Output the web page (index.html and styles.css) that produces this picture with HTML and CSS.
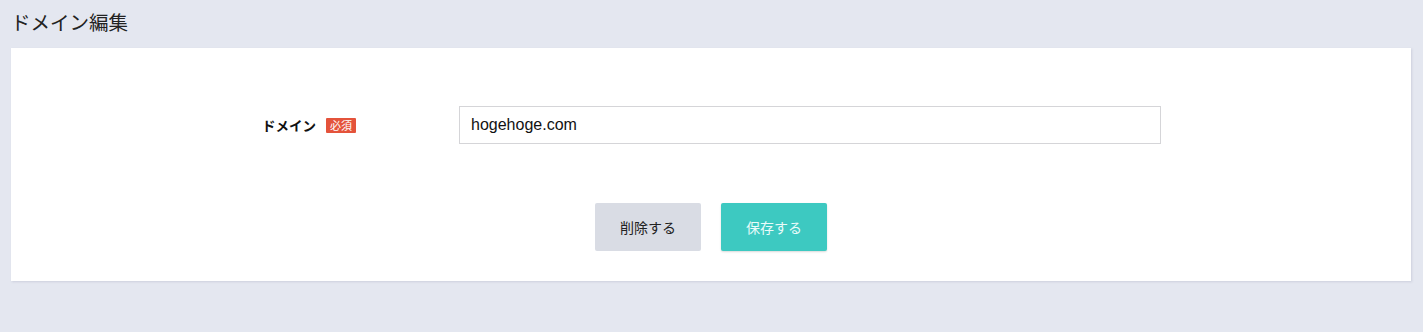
FILE: index.html
```html
<!DOCTYPE html>
<html lang="ja">
<head>
<meta charset="utf-8">
<title>ドメイン編集</title>
<link rel="stylesheet" href="styles.css">
</head>
<body>
<header class="page-header">
  <h1 class="page-title">ドメイン編集</h1>
</header>
<main class="card">
  <form class="form">
    <div class="form-row">
      <label class="form-label" for="domain">ドメイン <span class="badge">必須</span></label>
      <input class="form-input" id="domain" type="text" value="hogehoge.com">
    </div>
    <div class="actions">
      <button type="button" class="btn btn-delete">削除する</button>
      <button type="button" class="btn btn-save">保存する</button>
    </div>
  </form>
</main>
</body>
</html>
```
FILE: styles.css
```css
html, body {
  margin: 0;
  padding: 0;
}
body {
  background: #e4e7f0;
  font-family: "Liberation Sans", "Noto Sans CJK JP", sans-serif;
  color: #222;
  width: 1423px;
  height: 332px;
  overflow: hidden;
}
.page-header {
  padding: 10px 11px 14px;
  height: 24px;
}
.page-title {
  margin: 0;
  font-family: "Noto Sans CJK JP", sans-serif;
  font-weight: 400;
  font-size: 19.5px;
  line-height: 24px;
  color: #222;
}
.card {
  margin: 0 12px 0 11px;
  background: #fff;
  box-shadow: 1px 1px 2px rgba(160, 165, 185, 0.35);
  padding: 58px 0 30px;
}
.form {
  width: 900px;
  margin: 0 auto;
}
.form-row {
  display: grid;
  grid-template-columns: 198px 702px;
  align-items: center;
}
.form-label {
  font-family: "Noto Sans CJK JP", sans-serif;
  font-weight: 700;
  font-size: 13.5px;
  color: #111;
  display: flex;
  align-items: center;
  gap: 10px;
  padding-left: 1px;
}
.badge {
  display: inline-block;
  background: #e4533b;
  color: #fff;
  font-weight: 400;
  font-size: 11px;
  line-height: 15px;
  padding: 0 4px;
  border-radius: 1px;
}
.form-input {
  box-sizing: border-box;
  height: 38px;
  border: 1px solid #d5d5d8;
  border-radius: 0;
  padding: 0 11px;
  font-family: "Liberation Sans", sans-serif;
  font-size: 16px;
  color: #111;
  outline: none;
  width: 702px;
}
.actions {
  display: flex;
  justify-content: center;
  gap: 20px;
  margin-top: 59px;
}
.btn {
  width: 106px;
  height: 48px;
  border: none;
  border-radius: 2px;
  font-family: "Noto Sans CJK JP", sans-serif;
  font-size: 14px;
  cursor: pointer;
}
.btn-delete {
  background: #d9dce4;
  color: #222;
}
.btn-save {
  background: #3dc9c1;
  color: #e9fbfa;
  box-shadow: 0 1px 2px rgba(0, 0, 0, 0.15);
}
```
